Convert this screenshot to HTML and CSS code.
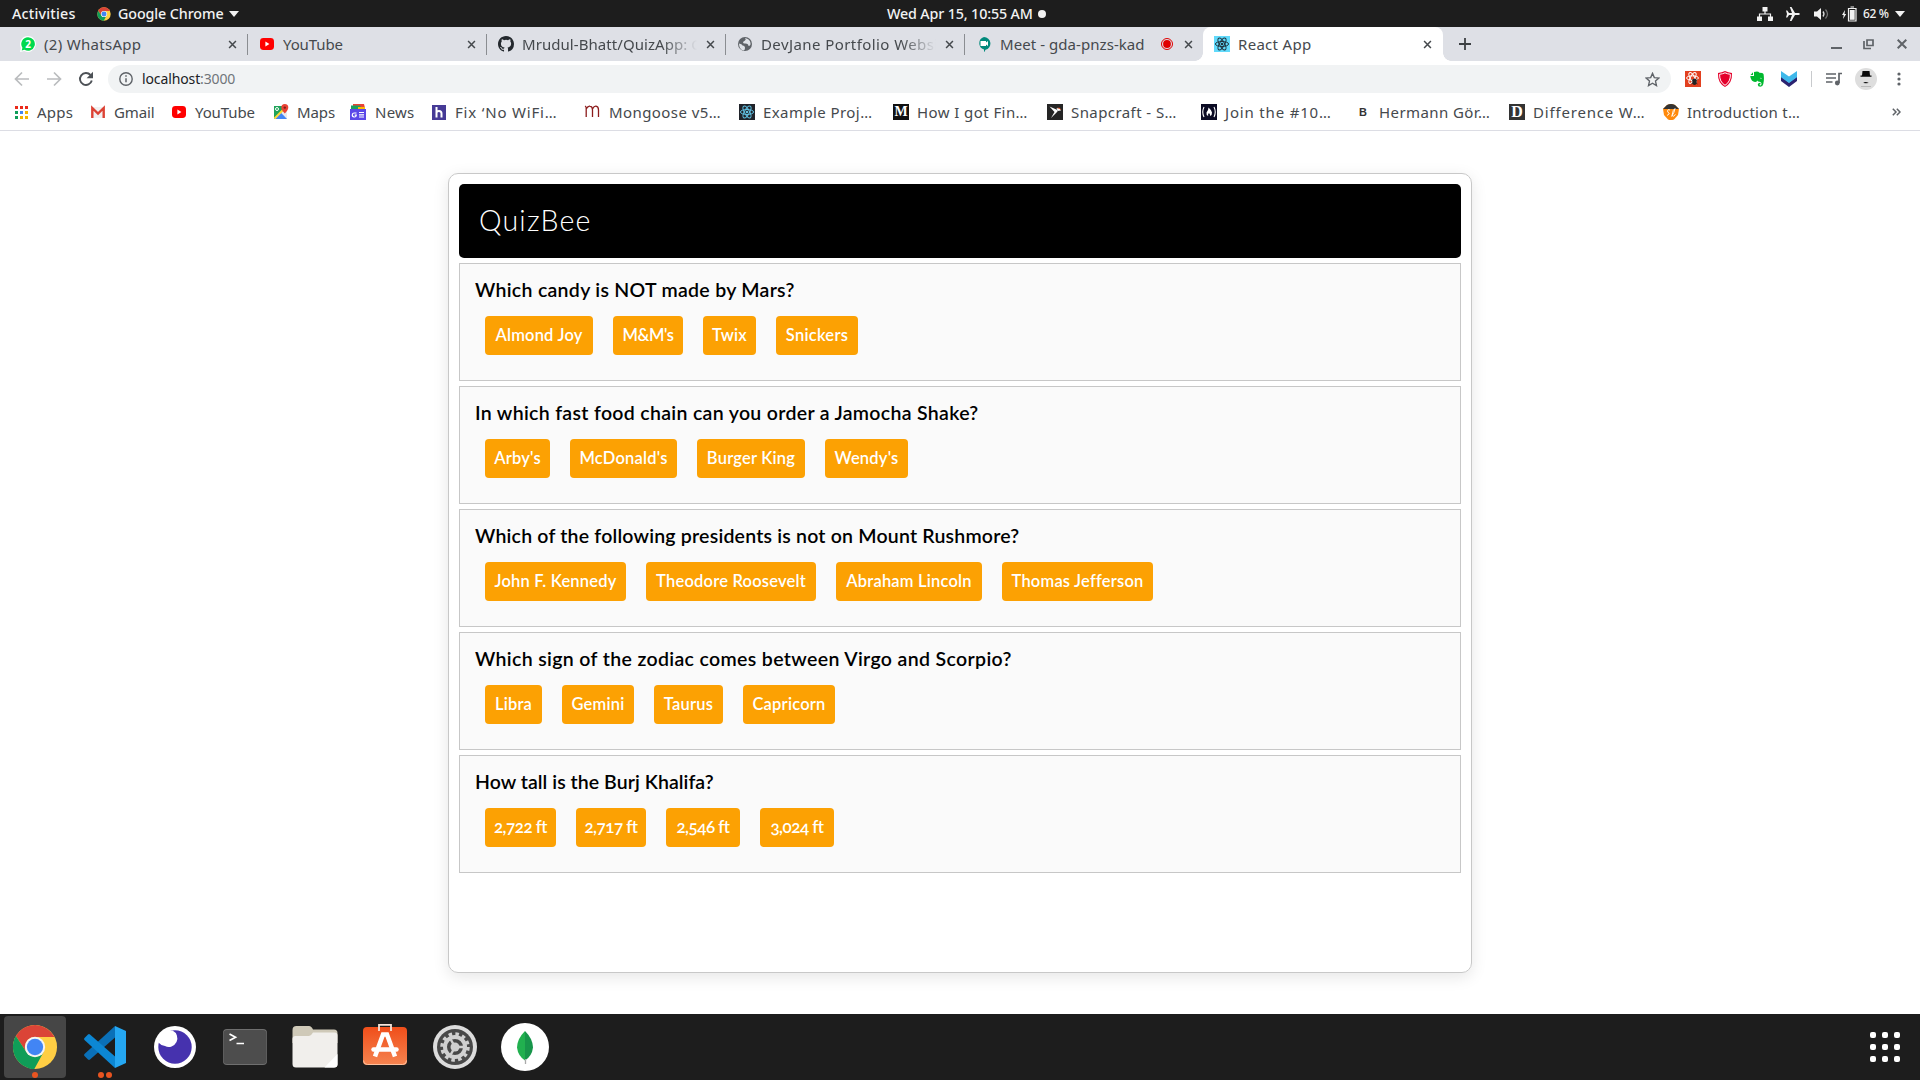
FILE: index.html
```html
<!DOCTYPE html>
<html lang="en">
<head>
<meta charset="utf-8">
<title>React App</title>
<link rel="stylesheet" href="styles.css">
</head>
<body>
<svg class="defs" width="0" height="0">
  <symbol id="chrome" viewBox="0 0 48 48">
    <circle cx="24" cy="24" r="23" fill="#ffce44"/>
    <path d="M4 12.6A23 23 0 0 1 44.4 13.6H24A10.4 10.4 0 0 0 15 29.2z" fill="#db4437"/>
    <path d="M4 12.6A23 23 0 0 0 23.3 47L33 29.2A10.4 10.4 0 0 1 15 29.2z" fill="#0f9d58"/>
    <circle cx="24" cy="24" r="10.6" fill="#f4f4f4"/>
    <circle cx="24" cy="24" r="8.5" fill="#4285f4"/>
  </symbol>
  <symbol id="youtube" viewBox="0 0 16 16">
    <rect x="1" y="2" width="14" height="12" rx="3.4" fill="#f00"/><path d="M6.4 5.6v4.8L10.4 8z" fill="#fff"/>
  </symbol>
  <symbol id="atom" viewBox="0 0 16 16">
    <g fill="none" stroke="currentColor" stroke-width="1">
      <ellipse cx="8" cy="8" rx="6.6" ry="2.5"/><ellipse cx="8" cy="8" rx="6.6" ry="2.5" transform="rotate(60 8 8)"/><ellipse cx="8" cy="8" rx="6.6" ry="2.5" transform="rotate(120 8 8)"/>
    </g><circle cx="8" cy="8" r="1.3" fill="currentColor"/>
  </symbol>
  <symbol id="close" viewBox="0 0 10 10">
    <path d="M1.2 1.2l7.6 7.6M8.8 1.2L1.2 8.8" stroke="currentColor" stroke-width="1.7"/>
  </symbol>
</svg>

<header class="topbar">
  <div class="topbar-left">
    <span class="activities">Activities</span>
    <svg class="i14" viewBox="0 0 48 48"><use href="#chrome"/></svg>
    <span class="app-name">Google Chrome</span>
    <svg width="10" height="6" viewBox="0 0 10 6"><path d="M0 0h10L5 6z" fill="#f2f2f2"/></svg>
  </div>
  <div class="clock"><span class="date">Wed Apr 15, 10:55 AM</span><i class="notice"></i></div>
  <div class="status">
    <svg width="16" height="14" viewBox="0 0 16 14"><path d="M5.5 0h5v4.500h-5zM0 9.500h5V14H0zM11 9.500h5V14h-5z" fill="#f2f2f2"/><path d="M8 4v3M2.500 10V7h11v3" fill="none" stroke="#f2f2f2" stroke-width="1.200"/></svg>
    <svg width="14" height="14" viewBox="0 0 14 14"><path d="M0 3.500h1.300L3 6h3L3.800 0h1.700L9 6h3.600q1.400.300 1.400 1t-1.400 1H9l-3.500 6H3.800L6 8H3L1.300 10.500H0L1 7z" fill="#f2f2f2"/></svg>
    <svg width="15" height="14" viewBox="0 0 15 14"><path d="M0 4.500h3L7 1v12L3 9.500H0z" fill="#f2f2f2"/><path d="M9 4.500q2 2.500 0 5" fill="none" stroke="#ddd" stroke-width="1.300"/><path d="M11.500 2.500q4 4.500 0 9" fill="none" stroke="#777" stroke-width="1.200"/></svg>
    <svg width="15" height="16" viewBox="0 0 15 16"><path d="M3 4L0 9h1.700L1 13l3.200-5H2.500z" fill="#f2f2f2"/><path d="M6.500 2.500h7.500V15H6.500zM8.500 1h3.500" fill="none" stroke="#f2f2f2" stroke-width="1.200"/><path d="M7.800 4h4.900v9.800H7.800z" fill="#f2f2f2"/></svg>
    <span class="battery">62 %</span>
    <svg width="10" height="6" viewBox="0 0 10 6"><path d="M0 0h10L5 6z" fill="#f2f2f2"/></svg>
  </div>
</header>

<nav class="tabs">
  <div class="tab">
    <svg class="i16" viewBox="0 0 16 16"><path d="M8 0a8 8 0 1 1-3.800 15.100L0 16l1-4A8 8 0 0 1 8 0z" fill="#fff"/><path d="M8 1.200a6.800 6.800 0 1 1-3.500 12.600l-2.800.6.700-2.700A6.800 6.800 0 0 1 8 1.200z" fill="#00d94e"/><text x="8" y="11.500" text-anchor="middle" class="badge-2">2</text></svg>
    <span class="tab-title">(2) WhatsApp</span><svg class="x"><use href="#close"/></svg>
  </div>
  <div class="tab">
    <svg class="i16"><use href="#youtube"/></svg>
    <span class="tab-title tight">YouTube</span><svg class="x"><use href="#close"/></svg>
  </div>
  <div class="tab">
    <svg class="i16" viewBox="0 0 16 16"><path fill="#24292e" d="M8 0C3.580 0 0 3.580 0 8c0 3.540 2.290 6.530 5.470 7.590.4.070.550-.170.550-.380v-1.490c-2.010.370-2.530-.490-2.690-.940-.090-.230-.480-.940-.820-1.130-.280-.150-.680-.520-.010-.530.630-.010 1.080.580 1.230.820.720 1.210 1.870.870 2.330.660.070-.520.280-.870.510-1.070-1.780-.200-3.640-.890-3.640-3.950 0-.870.310-1.590.820-2.150-.080-.200-.360-1.020.080-2.120 0 0 .670-.210 2.200.820a7.600 7.600 0 0 1 4 0c1.530-1.040 2.200-.820 2.200-.820.440 1.100.160 1.920.080 2.120.510.560.820 1.270.820 2.150 0 3.070-1.870 3.750-3.650 3.950.290.250.540.730.540 1.480v2.200c0 .210.150.460.550.380A8 8 0 0 0 16 8c0-4.420-3.580-8-8-8z"/></svg>
    <span class="tab-title fade snug">Mrudul-Bhatt/QuizApp: C</span><svg class="x"><use href="#close"/></svg>
  </div>
  <div class="tab">
    <svg class="i16" viewBox="0 0 16 16"><circle cx="8" cy="8" r="7" fill="#5f6368"/><path d="M2 7.500q3 .500 3.500 2 2.500 0 2.500 2.500 0 2-1.500 2.500Q2 13.500 2 7.500zM8 2q1.500 1.500 0 2.500L6 6q0 2 2.500 1.500 3 0 3 2.500 2.500-.500 2-3-.500-4-5.500-5z" fill="#dee1e6"/></svg>
    <span class="tab-title fade wide">DevJane Portfolio Websi</span><svg class="x"><use href="#close"/></svg>
  </div>
  <div class="tab">
    <svg class="i16" viewBox="0 0 16 16"><path d="M8 1a6.500 6.500 0 0 1 1.500 12.800L8 16.500v-3A6.500 6.500 0 0 1 8 1z" fill="#00897b"/><path d="M4.500 5h5.500v1.500L12 5v5l-2-1.500V10H4.500z" fill="#fff"/></svg>
    <span class="tab-title snug">Meet - gda-pnzs-kad</span>
    <svg class="rec" viewBox="0 0 14 14"><circle cx="7" cy="7" r="5.500" fill="none" stroke="#e00000" stroke-width="1"/><circle cx="7" cy="7" r="3.900" fill="#e00000"/></svg>
    <svg class="x"><use href="#close"/></svg>
  </div>
  <div class="tab active">
    <svg class="i16 react-tab" viewBox="0 0 16 16"><use href="#atom"/></svg>
    <span class="tab-title">React App</span><svg class="x"><use href="#close"/></svg>
  </div>
  <svg class="new-tab" viewBox="0 0 12 12"><path d="M6 0v12M0 6h12" stroke="#3c4043" stroke-width="1.800"/></svg>
  <div class="win">
    <svg width="11" height="12" viewBox="0 0 11 12"><path d="M0 10h11" stroke="#5f6368" stroke-width="2"/></svg>
    <svg width="11" height="12" viewBox="0 0 11 12"><path d="M4 2h6v5.500H4zM1 3v7.500h7" fill="none" stroke="#5f6368" stroke-width="1.700"/></svg>
    <svg width="10" height="10" viewBox="0 0 10 10"><path d="M.7.7l8.600 8.600M9.300.7L.7 9.300" stroke="#5f6368" stroke-width="2"/></svg>
  </div>
</nav>

<div class="toolbar">
  <svg class="i16" viewBox="0 0 16 16"><path d="M15 8H2M8 1.500L1.500 8 8 14.500" fill="none" stroke="#babcbe" stroke-width="1.700"/></svg>
  <svg class="i16" viewBox="0 0 16 16"><path d="M1 8h13M8 1.500L14.500 8 8 14.500" fill="none" stroke="#babcbe" stroke-width="1.700"/></svg>
  <svg class="i16" viewBox="0 0 16 16"><path d="M13.800 9.500A6 6 0 1 1 12.500 4" fill="none" stroke="#4d5156" stroke-width="1.900"/><path d="M15 .8v6.400H8.600z" fill="#4d5156"/></svg>
  <div class="omnibox">
    <svg class="i14" viewBox="0 0 14 14"><circle cx="7" cy="7" r="6.200" fill="none" stroke="#5f6368" stroke-width="1.400"/><path d="M7 6.300v4M7 3.300v1.500" stroke="#5f6368" stroke-width="1.500"/></svg>
    <span class="url"><b>localhost</b>:3000</span>
    <svg class="i14 star" viewBox="0 0 14 14"><path d="M7 1.300l1.700 3.900 4.300.4-3.200 2.900.9 4.200L7 10.500l-3.700 2.200.9-4.200L1 5.600l4.300-.4z" fill="none" stroke="#5f6368" stroke-width="1.300"/></svg>
  </div>
  <div class="extensions">
    <svg class="i16" viewBox="0 0 16 16"><path d="M0 0h16v16H0z" fill="#e2401f"/><g fill="none" stroke="#fff"><ellipse cx="7.500" cy="7" rx="6" ry="2.200"/><ellipse cx="7.500" cy="7" rx="6" ry="2.200" transform="rotate(60 7.500 7)"/><ellipse cx="7.500" cy="7" rx="6" ry="2.200" transform="rotate(120 7.500 7)"/></g><ellipse cx="9.500" cy="10.800" rx="2.200" ry="3.200" fill="#222"/><path d="M6.500 8.500l6 4.500M12.500 8.500l-6 4.500" stroke="#222" stroke-width=".8"/></svg>
    <svg class="i16" viewBox="0 0 16 16"><path d="M8 0Q11 1.700 15 2 15.500 12 8 16 .5 12 1 2 5 1.700 8 0z" fill="#e4002b"/><path d="M8 1.800q2.500 1.200 5.400 1.500.2 7.700-5.400 11-5.600-3.300-5.400-11Q5.500 3 8 1.800z" fill="none" stroke="#fff" stroke-width="1"/></svg>
    <svg class="i16" viewBox="0 0 16 16"><path d="M5 1q4-1.300 5.500.7 3.500 0 4 1.300 1 5-.2 10-.6 2.800-3 2.800-2.600-.2-2.500-2.300.2-2 2.700-1.800v1.500h-1q0 1.200 1 1.200 1-.2 1-2-.2-1.800-3.400-2l-1-1Q8 11 6 11 2.500 10.700 1.500 6.500L1.300 5H5z" fill="#00b82f"/><path d="M1.500 4L4 1.200V4z" fill="#00b82f"/><path d="M10.800 7.300q1.300-1.300 2 .4-1-.5-2-.4z" fill="#fff"/></svg>
    <svg class="i16" viewBox="0 0 16 16"><path d="M0 5.500l8 6 8-6V10l-8 6-8-6z" fill="#2b2370"/><path d="M0 0l8 5.500L16 0v6.300L8 12 0 6.300z" fill="#3fb8ea"/></svg>
    <i class="sep"></i>
    <svg class="i16 music" viewBox="0 0 16 14"><path d="M0 2h10M0 6h10M0 10h6.500M16 1.500h-3V11" fill="none" stroke="#5f6368" stroke-width="1.700"/><circle cx="11.300" cy="11" r="2.400" fill="#5f6368"/></svg>
    <svg class="avatar" viewBox="0 0 22 22"><circle cx="11" cy="11" r="11" fill="#dedede"/><path d="M7.500 3h7l.5 4.500h1.500v1.200h-11V7.500H7z" fill="#0a0a0a"/><path d="M8.200 15q2-1.800 5.600 0-2.800.3-5.600 0z" fill="#0a0a0a"/><path d="M6 18.500h10" stroke="#aaa" stroke-width=".7"/></svg>
    <svg class="dots" viewBox="0 0 4 14"><g fill="#5f6368"><circle cx="2" cy="2" r="1.600"/><circle cx="2" cy="7" r="1.600"/><circle cx="2" cy="12" r="1.600"/></g></svg>
  </div>
</div>

<nav class="bookmarks">
  <div class="bm"><svg class="i16" viewBox="0 0 16 16"><path d="M2 2h3v3H2zM7 2h3v3H7zM12 2h3v3h-3z" fill="#ea2a1a"/><path d="M2 7h3v3H2zM2 12h3v3H2z" fill="#0f9d58"/><path d="M7 7h3v3H7z" fill="#4285f4"/><path d="M12 7h3v3h-3zM7 12h3v3H7zM12 12h3v3h-3z" fill="#f4b400"/></svg><span>Apps</span></div>
  <div class="bm"><svg class="i16" viewBox="0 0 16 16"><path d="M2 3h12v11H2z" fill="#f1f1f1"/><path d="M2.300 14V4L8 9.500 13.700 4v10" fill="none" stroke="#dc4234" stroke-width="2.400"/></svg><span class="tight">Gmail</span></div>
  <div class="bm"><svg class="i16"><use href="#youtube"/></svg><span class="tight">YouTube</span></div>
  <div class="bm"><svg class="i16" viewBox="0 0 16 16"><path d="M1 2h13v13H1z" fill="#20a35a"/><path d="M1 15L14 3v12z" fill="#e8eaed"/><path d="M8 8.800L14 15H2z" fill="#4285f4"/><path d="M1.500 14.500L13 3" stroke="#fdd835" stroke-width="2"/><path d="M11.800 0a3.500 3.500 0 0 1 3.500 3.500q0 2.500-3.500 6-3.500-3.500-3.500-6A3.500 3.500 0 0 1 11.800 0z" fill="#ea4335"/><circle cx="11.800" cy="3.600" r="1.200" fill="#7b2018"/><circle cx="4" cy="5" r="1.500" fill="none" stroke="#fff"/></svg><span class="tight">Maps</span></div>
  <div class="bm"><svg class="i16" viewBox="0 0 16 16"><path d="M1 3h9v4H1z" fill="#0f9d58"/><path d="M3 0h11l1 4H3z" fill="#ea4335"/><path d="M1 1.500h9l2 4H1z" fill="#18a05e"/><path d="M8 3h7v4H8z" fill="#fbbc04"/><path d="M0 5h16v11H0z" fill="#5b48e8"/><path d="M6.500 9H4.500a2 2 0 1 0 1.800 2.200H4.700M9 8.500h5M9 10.800h5M9 13h5" fill="none" stroke="#fff" stroke-width="1.200"/></svg><span class="news">News</span></div>
  <div class="bm"><svg class="i16" viewBox="0 0 16 16"><path d="M1 1h14v15H1z" fill="#463a96"/><path d="M5.500 3v10.500M5.500 9q0-2 2.500-2t2.500 2.500v4" fill="none" stroke="#fff" stroke-width="2"/></svg><span class="wider">Fix ‘No WiFi…</span></div>
  <div class="bm"><svg class="i16" viewBox="0 0 16 16"><path d="M2.200 13V4q0-1.500-1.200-2M2.200 5Q4 1.800 6 2.200 8.500 2.500 8.500 6v7M8.500 5q1.500-3 3.500-2.800 2.500.3 2.500 3.800v7" fill="none" stroke="#8c1c1c" stroke-width="1.300"/></svg><span class="wide mongoose">Mongoose v5…</span></div>
  <div class="bm"><svg class="i16 react-bm" viewBox="0 0 16 16"><use href="#atom"/></svg><span class="wide">Example Proj…</span></div>
  <div class="bm"><i class="letter medium">M</i><span class="wide">How I got Fin…</span></div>
  <div class="bm"><svg class="i16" viewBox="0 0 16 16"><path d="M0 0h16v16H0z" fill="#252525"/><path d="M2.500 2.500L10.500 6v1.500L4 14l3.500-6z" fill="#fff"/><path d="M9.500 4.200h3L14 6.500l-3.300.5z" fill="#fff"/><path d="M10 3.800h2.500L14.500 6z" fill="#e95420"/></svg><span class="wide">Snapcraft - S…</span></div>
  <div class="bm"><svg class="i16" viewBox="0 0 16 16"><path d="M0 0h16v16H0z" fill="#0a0a23"/><path d="M3 3Q.5 8 3 13M13 3q2.500 5 0 10" fill="none" stroke="#fff" stroke-width="1.100"/><path d="M7.500 3.500q3 2.500 3.500 5 .3 2.500-2 3.500.5-1.500-1-3-1.500 1-.8 3Q5 11 5.500 8.500 7.500 6 7.500 3.500z" fill="#fff"/></svg><span class="wider">Join the #10…</span></div>
  <div class="bm"><i class="letter plain">B</i><span class="wide">Hermann Gör…</span></div>
  <div class="bm"><i class="letter dark">D</i><span class="wider">Difference W…</span></div>
  <div class="bm"><svg class="i16" viewBox="0 0 16 16"><path d="M0 5L4 1q4-2 8 0l4 4-1 6-4 4.500q-3 1-6 0L1 11z" fill="#ff8a0c"/><path d="M0 5L4 1q4-2 8 0l4 4z" fill="#333"/><path d="M7 6q-2.500-1-2.500.8T6 9t-2 2.500M8.500 12.500q3-4 3.500-8-2 .5-3 7 1 2 3.500-1" fill="none" stroke="#fff" stroke-width=".9"/></svg><span>Introduction t…</span></div>
  <svg class="more" viewBox="0 0 9 8"><path d="M.8.8L4 4 .8 7.200M4.800.8L8 4 4.800 7.200" fill="none" stroke="#5f6368" stroke-width="1.500"/></svg>
</nav>

<main class="page">
  <section class="quiz">
    <h1>QuizBee</h1>
    <article><h2>Which candy is NOT made by Mars?</h2>
      <div class="answers"><button class="w108">Almond Joy</button><button class="w70 close-set">M&amp;M's</button><button class="w53">Twix</button><button class="w82 open-set">Snickers</button></div></article>
    <article><h2 class="q2">In which fast food chain can you order a Jamocha Shake?</h2>
      <div class="answers"><button class="w65">Arby's</button><button class="w107">McDonald's</button><button class="w108">Burger King</button><button class="w83">Wendy's</button></div></article>
    <article><h2 class="q3">Which of the following presidents is not on Mount Rushmore?</h2>
      <div class="answers"><button class="w141">John F. Kennedy</button><button class="w170">Theodore Roosevelt</button><button class="w146">Abraham Lincoln</button><button class="w151">Thomas Jefferson</button></div></article>
    <article><h2 class="q4">Which sign of the zodiac comes between Virgo and Scorpio?</h2>
      <div class="answers"><button class="w57">Libra</button><button class="w72">Gemini</button><button class="w69">Taurus</button><button class="w92">Capricorn</button></div></article>
    <article><h2 class="q5">How tall is the Burj Khalifa?</h2>
      <div class="answers figures"><button class="w71">2,722 ft</button><button class="w70">2,717 ft</button><button class="w74">2,546 ft</button><button class="w74">3,024 ft</button></div></article>
  </section>
</main>

<footer class="dock">
  <div class="launchers">
    <svg viewBox="0 0 70 66"><rect x="4" y="2" width="62" height="62" rx="4" fill="#464646"/><svg x="12" y="10" width="46" height="46"><use href="#chrome"/></svg><circle cx="35" cy="61" r="3" fill="#e95420"/></svg>
    <svg viewBox="0 0 70 66"><path d="M45 12l11 5v32l-11 5V12z" fill="#25a7f2"/><path d="M45 12v11.500L20 45.500q-1 .8-2 0L14.500 42q-1-1 0-2z" fill="#0a70b8"/><path d="M45 54V42.500L20 20.500q-1-.8-2 0L14.500 24q-1 1 0 2z" fill="#0c87d4"/><circle cx="31" cy="61" r="3" fill="#e95420"/><circle cx="39" cy="61" r="3" fill="#e95420"/></svg>
    <svg viewBox="0 0 70 66"><circle cx="35" cy="33" r="21" fill="#fff"/><circle cx="35" cy="33" r="16.700" fill="#4632ae"/><path d="M19 27q1-7 8.500-10l5-.5a8 8 0 0 1-7.500 15.500q-3.500 0-6-3z" fill="#fff"/></svg>
    <svg viewBox="0 0 70 66"><rect x="13" y="15" width="44" height="36" rx="4" fill="#6f6f6f"/><rect x="13.500" y="16" width="43" height="34" rx="3.500" fill="#4d4d4d"/><path d="M19.500 20l6 3.200-6 3.200M26.500 29.500h7.500" fill="none" stroke="#fff" stroke-width="1.700"/></svg>
    <svg viewBox="0 0 70 66"><path d="M12.500 16q0-4 4-4H29q2.500 0 4 3.500h21q3.500 0 3.500 3.500v10h-45z" fill="#cfc9b8"/><path d="M12.500 25q0-3 3-3H29q2 0 4-3.500h21.500q3 0 3 3v28.500q0 3.500-3.500 3.500H16q-3.500 0-3.500-3.500z" fill="#f1efec"/><path d="M57.500 40v10.500q0 3-3.500 3h-9.500z" fill="#fff"/></svg>
    <svg viewBox="0 0 70 66"><defs><linearGradient id="bag" x2="0" y2="1"><stop stop-color="#f04e1a"/><stop offset="1" stop-color="#f58450"/></linearGradient></defs><rect x="13" y="13" width="44" height="38" rx="4" fill="url(#bag)"/><path d="M13.500 46.500q0 4 4 4h35q4 0 4-4" fill="none" stroke="#ffc09c"/><path d="M29 17v-6.200h12V17" fill="none" stroke="#f6e4da" stroke-width="1.800"/><path d="M25 42.500L33 20.500h4l8 22" fill="none" stroke="#fff" stroke-width="4.500"/><path d="M23.500 35.500h23" stroke="#fff" stroke-width="4.500" stroke-linecap="round"/></svg>
    <svg viewBox="0 0 70 66"><circle cx="35" cy="33" r="22" fill="#dcdcdc"/><circle cx="35" cy="33" r="18" fill="#484848"/><circle cx="35" cy="33" r="13" fill="none" stroke="#d0d0d0" stroke-width="3.500" stroke-dasharray="3.500 3.307"/><circle cx="35" cy="33" r="10" fill="none" stroke="#d0d0d0" stroke-width="4"/><circle cx="35" cy="33" r="4.500" fill="#d0d0d0"/><path d="M35 33h9M35 33l-4.500-8M35 33l-4.500 8" stroke="#d0d0d0" stroke-width="2.500"/></svg>
    <svg viewBox="0 0 70 66"><circle cx="35" cy="33" r="24" fill="#fff"/><path d="M35 17q-8 8-8 16.500Q28 42 35 46.500z" fill="#21b04f"/><path d="M35 17q8 8 8 16.500Q42 42 35 46.500z" fill="#17954a"/><path d="M35.500 45v5" stroke="#aaa" stroke-width="1.300"/></svg>
  </div>
  <div class="app-grid"><i></i><i></i><i></i><i></i><i></i><i></i><i></i><i></i><i></i></div>
</footer>
</body>
</html>
```
FILE: styles.css
```css
* { box-sizing: border-box; }
body {
  margin: 0; width: 1920px; height: 1080px; overflow: hidden;
  display: flex; flex-direction: column; background: #fff;
  font-family: "Noto Sans", "Open Sans", sans-serif;
}
svg { flex: none; display: block; }
.defs { display: none; }
.i14 { width: 14px; height: 14px; }
.i16 { width: 16px; height: 16px; }

/* desktop bar */
.topbar {
  flex: none; height: 27px; background: #1d1d1d; color: #f2f2f2;
  font-size: 14.3px; font-weight: 500; line-height: 27px;
  display: grid; grid-template-columns: 887px auto 1fr; align-items: center;
}
.topbar-left { display: flex; align-items: center; padding-left: 12px; }
.activities { width: 85px; letter-spacing: .2px; }
.app-name { width: 111px; margin-left: 7px; letter-spacing: -.1px; }
.clock { display: flex; align-items: center; gap: 5px; }
.date { letter-spacing: -.15px; }
.notice { width: 8px; height: 8px; border-radius: 50%; background: #f2f2f2; }
.status { display: flex; align-items: center; justify-content: flex-end; padding-right: 15px; }
.status svg + svg { margin-left: 13px; }
.status svg:nth-child(3) { margin-left: 14px; }
.status .battery { width: 27px; margin: 0 5px 0 6px; font-size: 12px; letter-spacing: -.4px; white-space: nowrap; }

/* tab strip */
.tabs { flex: none; height: 34px; background: #dee0e6; display: flex; align-items: center; padding-left: 9px; color: #45494d; }
.tab {
  flex: none; width: 239px; height: 34px; padding: 0 11px; display: flex; align-items: center;
  font-size: 15px; position: relative;
}
.tab:nth-child(-n+4)::after { content: ""; position: absolute; right: 0; top: 7px; width: 1px; height: 21px; background: #8a8d91; }
.tab-title { flex: 1; margin-left: 8px; white-space: nowrap; overflow: hidden; letter-spacing: .3px; line-height: 34px; }
.tab-title.fade { -webkit-mask-image: linear-gradient(90deg, #000 80%, transparent); mask-image: linear-gradient(90deg, #000 80%, transparent); }
.x { width: 9px; height: 9px; margin: 0 0 0 9px; color: #45494d; }
.rec { width: 14px; height: 14px; }
.tab .rec { margin-right: 1px; }
.tab.active { background: #fff; width: 240px; margin-left: -1px; border-radius: 8px 8px 0 0; }
.tab.active .x { margin-right: 0; }
.tab.active::before, .tab.active::after { content: ""; position: absolute; bottom: 0; width: 8px; height: 8px; }
.tab.active::before { left: -8px; background: radial-gradient(circle at 0 0, transparent 7.5px, #fff 8px); }
.tab.active::after { right: -8px; background: radial-gradient(circle at 100% 0, transparent 7.5px, #fff 8px); }
.react-tab { background: #61dafb; color: #20343f; }
.react-bm { background: #20232a; color: #61bfe0; }
.badge-2 { font: bold 10px "Noto Sans", sans-serif; fill: #fff; }
.new-tab { width: 12px; height: 12px; margin-left: 16px; }
.win { margin-left: auto; padding-right: 13px; display: flex; align-items: center; gap: 21px; }
.win svg:last-child { margin-left: 2px; }

.tab-title.tight, .bm .tight { letter-spacing: -.1px; }
.tab-title.snug { letter-spacing: .06px; }
.tab-title.wide, .bm .wide { letter-spacing: .42px; }
.bm .wider { letter-spacing: .82px; }
.bm .news { margin-left: 1px; }
.bm .mongoose { margin-left: 1px; }

/* address bar */
.toolbar { flex: none; height: 36px; display: flex; align-items: center; padding-left: 14px; gap: 16px; }
.omnibox { width: 1563px; height: 28px; margin-left: -2px; border-radius: 14px; background: #f1f3f4; display: flex; align-items: center; padding: 0 11px; }
.url { flex: 1; margin-left: 9px; font-size: 14px; letter-spacing: -.12px; color: #70757a; line-height: 28px; }
.url b { font-weight: 400; color: #202124; }
.star { width: 15px; height: 15px; }
.extensions { display: flex; align-items: center; gap: 16px; margin-left: -2px; }
.sep { width: 1px; height: 16px; margin: 0 -2px 0 -2px; background: #c8cacd; }
.avatar { width: 22px; height: 22px; margin-left: -3px; }
.dots { width: 4px; height: 14px; margin-left: 4px; }

/* bookmarks */
.bookmarks {
  flex: none; height: 34px; padding: 0 0 4px 13px; border-bottom: 1px solid #dcdde4;
  display: grid; align-items: center; color: #45494d; font-size: 15px;
  grid-template-columns: 77px 81px 102px 77px 81px 153px 155px repeat(7, 154px) 86px;
}
.bm { display: flex; align-items: center; gap: 8px; white-space: nowrap; letter-spacing: .25px; line-height: 30px; }
.letter { width: 16px; height: 16px; text-align: center; font: bold 14px/16px "Liberation Serif", serif; letter-spacing: 0; color: #fff; }
.medium { background: #111; }
.dark { background: #333; font-size: 16px; }
.plain { font: bold 11px/16px "Liberation Sans", sans-serif; color: #333; }
.more { width: 9px; height: 8px; margin-left: 75px; }

/* quiz page */
.page { flex: 1; display: flex; flex-direction: column; align-items: center; padding-top: 42px; font-family: Lato, sans-serif; }
.quiz {
  width: 1024px; height: 800px; padding: 10px; border: 1px solid #c8c8c8; border-radius: 10px;
  box-shadow: 0 4px 16px rgba(0, 0, 0, .1); display: flex; flex-direction: column; gap: 5px;
}
h1 { margin: 0; height: 74px; padding-left: 20px; border-radius: 5px; background: #000; color: #fff; font-size: 28.5px; font-weight: 300; letter-spacing: 1.2px; line-height: 73px; }
article { height: 118px; padding: 12px 15px 0; border: 1px solid #c7c7c7; background: #fafafa; }
h2 { margin: 0; height: 30px; color: #000; font-size: 19.5px; font-weight: 600; letter-spacing: .29px; line-height: 28px; white-space: nowrap; }
.q2 { letter-spacing: .32px; }
.q3 { letter-spacing: .2px; }
.q4 { letter-spacing: .35px; }
.q5 { letter-spacing: .05px; }
.answers { display: flex; gap: 20px; padding: 10px 10px 0; }
button {
  height: 39px; padding: 0; border: 0; border-radius: 4px; background: #fca103; color: #fff;
  font: 600 16.5px/39px Lato, sans-serif; letter-spacing: .2px; text-align: center; white-space: nowrap;
}
.close-set { letter-spacing: -.45px; }
.open-set { letter-spacing: .25px; }
.figures button { font-size: 17px; line-height: 37px; padding-bottom: 2px; letter-spacing: -.5px; font-variant-numeric: oldstyle-nums; }
.w53 { width: 53px; } .w57 { width: 57px; } .w65 { width: 65px; } .w69 { width: 69px; }
.w70 { width: 70px; } .w71 { width: 71px; } .w72 { width: 72px; } .w74 { width: 74px; }
.w82 { width: 82px; } .w83 { width: 83px; } .w92 { width: 92px; } .w107 { width: 107px; }
.w108 { width: 108px; } .w141 { width: 141px; } .w146 { width: 146px; } .w151 { width: 151px; } .w170 { width: 170px; }

/* dock */
.dock { flex: none; height: 66px; background: #1d1d1d; display: flex; justify-content: space-between; align-items: center; padding-right: 20px; }
.launchers { display: flex; }
.launchers > svg { width: 70px; height: 66px; }
.app-grid { display: grid; grid-template-columns: repeat(3, 6px); gap: 6px; }
.app-grid i { width: 6px; height: 6px; border-radius: 2px; background: #fff; }
```
